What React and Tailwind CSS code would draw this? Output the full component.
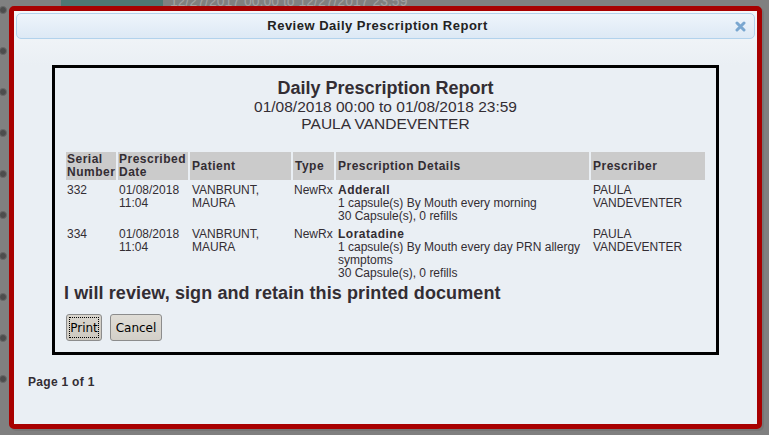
const cols = 'grid grid-cols-[50px_70px_101px_41px_253px_114px] gap-x-[2px]';

const rows = [
  {
    serial: '332',
    date: ['01/08/2018', '11:04'],
    patient: ['VANBRUNT,', 'MAURA'],
    type: 'NewRx',
    drug: 'Adderall',
    details: ['1 capsule(s) By Mouth every morning', '30 Capsule(s), 0 refills'],
  },
  {
    serial: '334',
    date: ['01/08/2018', '11:04'],
    patient: ['VANBRUNT,', 'MAURA'],
    type: 'NewRx',
    drug: 'Loratadine',
    details: ['1 capsule(s) By Mouth every day PRN allergy symptoms', '30 Capsule(s), 0 refills'],
  },
];

function Lines({ items }) {
  return items.map((t) => <div key={t}>{t}</div>);
}

export default function App() {
  return (
    <div className="relative w-[769px] h-[435px] overflow-hidden bg-[#808080] font-['Liberation_Sans',Arial,sans-serif]">
      {/* page behind the overlay */}
      <div className="absolute left-0 top-0 w-[8px] h-full flex flex-col gap-[33px] pt-[6px]">
        {Array.from({ length: 10 }).map((_, i) => (
          <div key={i} className="w-[8px] h-[8px] -ml-[1px] rounded-full bg-[#4d4d4d] border border-[#6a6a6a]" />
        ))}
      </div>
      <div className="absolute left-[61px] top-0 w-[102px] h-[6px] bg-[#4f7773]" />
      <div className="absolute left-[170px] -top-[9px] text-[14px] text-[#a3a3a3]">12/27/2017 00:00 to 12/27/2017 23:59</div>

      {/* dialog */}
      <div className="absolute left-[9px] top-[6px] w-[753px] h-[423px] border-[5px] border-[#a80000] rounded-[5px] bg-[#eaeff4] shadow-[2px_2px_0_#767676] flex flex-col">
        <div className="bg-gradient-to-b from-[#f5f8fa] to-[#eaeff4] h-[54px] p-[2px]">
          <div className="relative h-[26px] rounded-[5px] border border-[#b2d2ec] bg-gradient-to-b from-[#eef5fb] to-[#dde9f5] flex items-center justify-center pr-[16px]">
            <span className="text-[13px] font-bold tracking-[0.5px] text-[#222]">Review Daily Prescription Report</span>
            <svg className="absolute right-[8px] top-[7px]" width="11" height="11" viewBox="0 0 11 11">
              <path d="M2 2 L9 9 M9 2 L2 9" stroke="#7aa7d0" strokeWidth="3" strokeLinecap="round" />
            </svg>
          </div>
        </div>

        <div className="mx-[38px] h-[290px] border-[3px] border-black px-[11px] pt-[10px] text-[#332d33]">
          <div className="text-center">
            <div className="text-[18px] font-bold leading-[20px]">Daily Prescription Report</div>
            <div className="text-[15.5px] leading-[17px]">01/08/2018 00:00 to 01/08/2018 23:59</div>
            <div className="text-[15.5px] leading-[17px]">PAULA VANDEVENTER</div>
          </div>

          <div className="mt-[20px] text-[12px] leading-[13px]">
            <div className={`${cols} font-bold h-[28px] tracking-[0.5px]`}>
              <div className="bg-[#cbcbcb] flex flex-col justify-center px-[1px]"><div>Serial</div><div>Number</div></div>
              <div className="bg-[#cbcbcb] flex flex-col justify-center px-[1px]"><div>Prescribed</div><div>Date</div></div>
              <div className="bg-[#cbcbcb] flex items-center px-[2px]">Patient</div>
              <div className="bg-[#cbcbcb] flex items-center px-[2px]">Type</div>
              <div className="bg-[#cbcbcb] flex items-center px-[2px]">Prescription Details</div>
              <div className="bg-[#cbcbcb] flex items-center px-[2px]">Prescriber</div>
            </div>
            <div className="flex flex-col gap-[5px] pt-[4px]">
              {rows.map((r) => (
                <div key={r.serial} className={cols}>
                  <div className="px-[1px]">{r.serial}</div>
                  <div className="px-[1px]"><Lines items={r.date} /></div>
                  <div className="px-[2px]"><Lines items={r.patient} /></div>
                  <div className="px-[1px]">{r.type}</div>
                  <div className="px-[2px]">
                    <div className="font-bold tracking-[0.5px]">{r.drug}</div>
                    {r.details.map((d) => <div key={d}>{d}</div>)}
                  </div>
                  <div className="px-[2px]"><div>PAULA</div><div>VANDEVENTER</div></div>
                </div>
              ))}
            </div>
          </div>

          <div className="mt-[3px] -ml-[2px] text-[18px] font-bold leading-[21px] tracking-[0.1px]">I will review, sign and retain this printed document</div>

          <div className="mt-[10px] flex gap-[8px] font-['DejaVu_Sans',sans-serif] text-[12px] text-black">
            <button className="w-[36px] h-[27px] rounded-[3px] border border-[#8c8c8c] bg-gradient-to-b from-[#d8d4cc] to-[#cdc8bf] p-[2px]">
              <span className="flex h-full items-center justify-center border border-dotted border-black">Print</span>
            </button>
            <button className="w-[52px] h-[27px] rounded-[3px] border border-[#8c8c8c] bg-gradient-to-b from-[#e0ddd6] to-[#d3cfc8]">Cancel</button>
          </div>
        </div>

        <div className="mt-[18px] ml-[14px] text-[12px] font-bold tracking-[0.3px] text-[#332d33]">Page 1 of 1</div>
      </div>
    </div>
  );
}
